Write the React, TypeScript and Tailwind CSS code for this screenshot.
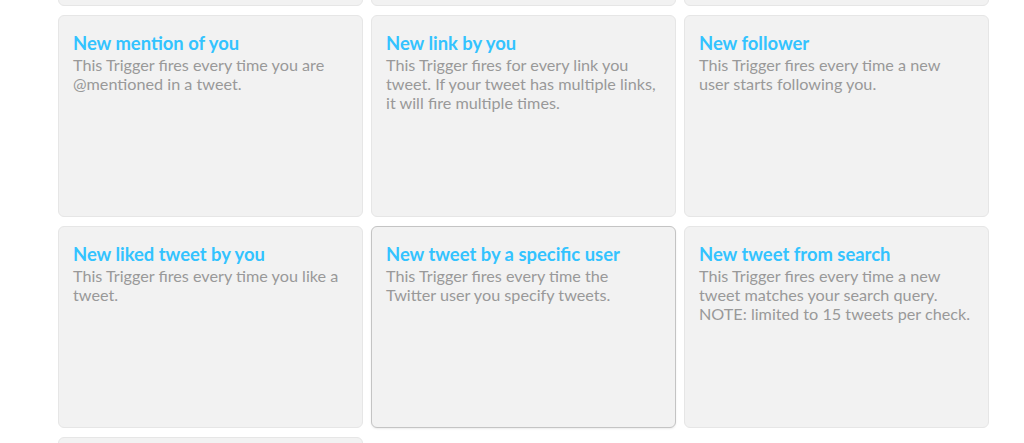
import React from "react";

const triggers = [
  { title: "New tweet by you", desc: "This Trigger fires every time you post a new tweet." },
  { title: "New tweet by you with hashtag", desc: "This Trigger fires every time you post a tweet with a specific hashtag." },
  { title: "New tweet by you in area", desc: "This Trigger fires every time you tweet from a location you specify." },
  { title: "New mention of you", desc: "This Trigger fires every time you are @mentioned in a tweet." },
  { title: "New link by you", desc: "This Trigger fires for every link you tweet. If your tweet has multiple links, it will fire multiple times." },
  { title: "New follower", desc: "This Trigger fires every time a new user starts following you." },
  { title: "New liked tweet by you", desc: "This Trigger fires every time you like a tweet." },
  { title: "New tweet by a specific user", desc: "This Trigger fires every time the Twitter user you specify tweets.", hover: true },
  { title: "New tweet from search", desc: "This Trigger fires every time a new tweet matches your search query. NOTE: limited to 15 tweets per check." },
  { title: "New tweet by anyone in area", desc: "This Trigger fires every time anyone tweets from a location you specify." },
];

const App = () => {
  return (
    <div className="h-[443px] overflow-hidden bg-white" style={{ fontFamily: "Lato, 'Noto Sans', sans-serif" }}>
      {/* page is scrolled: first row sits mostly above the fold */}
      <div className="ml-[58px] -mt-[196px] w-[931px] grid grid-cols-3 gap-x-[8px] gap-y-[9px]">
        {triggers.map((t) => (
          <div
            key={t.title}
            className={
              "h-[202px] rounded-[6px] bg-[#f2f2f2] pl-[14px] pr-[17px] pt-[15px] border " +
              (t.hover ? "border-[#c4c4c4] shadow-[0_1px_2px_rgba(0,0,0,0.08)]" : "border-[#e6e6e6]")
            }
          >
            <h2 className="text-[18.4px] leading-[24px] font-bold text-[#33c3ff]">{t.title}</h2>
            <p className="text-[16.2px] leading-[19px] text-[#999999]">{t.desc}</p>
          </div>
        ))}
      </div>
    </div>
  );
};

export default App;
